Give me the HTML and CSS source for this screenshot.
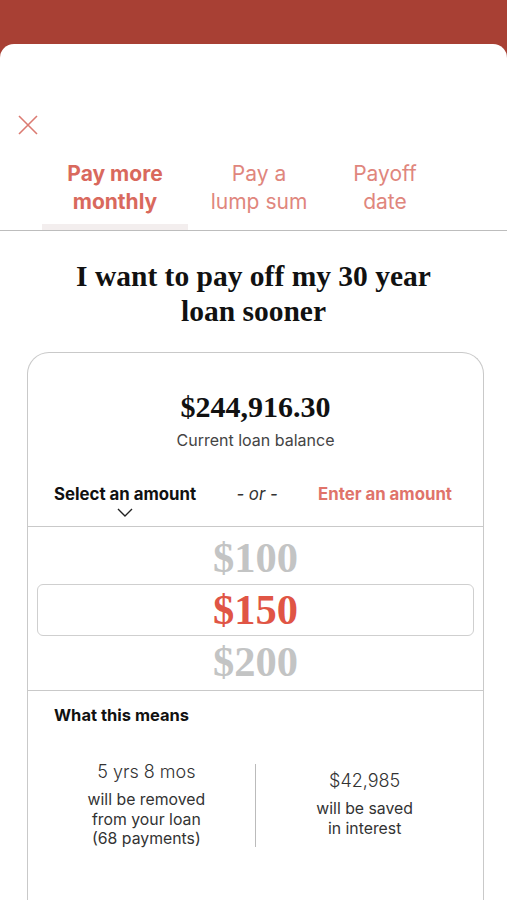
FILE: index.html
```html
<!DOCTYPE html>
<html lang="en">
<head>
    <meta charset="UTF-8">
    <meta name="viewport" content="width=device-width, initial-scale=1.0">
    <title>Pay off sooner</title>
    <link rel="stylesheet" href="styles.css">
</head>
<body>
    <div class="top-bar"></div>

    <div class="sheet">
        <button class="close" aria-label="Close">
            <svg width="22" height="22" viewBox="0 0 22 22">
                <path d="M2 2 L20 20 M20 2 L2 20" stroke="#db7b72" stroke-width="1.6" fill="none"/>
            </svg>
        </button>

        <!-- Onglets -->
        <nav class="tabs">
            <div class="tab tab-monthly active">Pay more<br>monthly</div>
            <div class="tab tab-lump">Pay a<br>lump sum</div>
            <div class="tab tab-date">Payoff<br>date</div>
        </nav>

        <h1 class="title">I want to pay off my 30 year<br>loan sooner</h1>

        <div class="card">
            <div class="balance">
                <div class="balance-value">$244,916.30</div>
                <div class="balance-label">Current loan balance</div>
            </div>

            <div class="choice-row">
                <div class="choice-select">
                    <span>Select an amount</span>
                    <svg width="16" height="9" viewBox="0 0 16 9">
                        <polyline points="1,1 8,8 15,1" stroke="#222" stroke-width="1.4" fill="none"/>
                    </svg>
                </div>
                <div class="choice-or">- or -</div>
                <div class="choice-enter">Enter an amount</div>
            </div>

            <div class="picker">
                <div class="picker-item">$100</div>
                <div class="picker-item selected">$150</div>
                <div class="picker-item">$200</div>
            </div>

            <div class="means">
                <h3>What this means</h3>
                <div class="stats">
                    <div class="stat stat-left">
                        <div class="stat-value">5 yrs 8 mos</div>
                        <div class="stat-text">will be removed<br>from your loan<br>(68 payments)</div>
                    </div>
                    <div class="stat-divider"></div>
                    <div class="stat stat-right">
                        <div class="stat-value">$42,985</div>
                        <div class="stat-text">will be saved<br>in interest</div>
                    </div>
                </div>
            </div>
        </div>
    </div>
</body>
</html>
```

FILE: styles.css
```css
body {
    font-family: Inter, "Noto Sans", sans-serif;
    margin: 0;
    padding: 0;
    background-color: #a84034;
    color: #111;
}
.top-bar {
    height: 44px;
}
.sheet {
    background-color: #fff;
    border-radius: 14px 14px 0 0;
    min-height: 856px;
    overflow: hidden;
}
.close {
    display: block;
    margin: 70px 0 0 17px;
    padding: 0;
    border: none;
    background: none;
    width: 22px;
    height: 22px;
}
.tabs {
    display: flex;
    margin-top: 24px;
    padding-left: 42px;
    border-bottom: 1.5px solid #bdbdbd;
}
.tab {
    text-align: center;
    font-size: 21px;
    line-height: 28px;
    color: #e0867d;
    padding-bottom: 8px;
    border-bottom: 6px solid transparent;
}
.tab-monthly {
    width: 146px;
}
.tab-lump {
    width: 142px;
}
.tab-date {
    width: 110px;
}
.tab.active {
    font-weight: 700;
    color: #d9695d;
    border-bottom-color: #f3eeee;
}
.title {
    font-family: "Liberation Serif", "Times New Roman", serif;
    font-weight: 700;
    font-size: 29.5px;
    line-height: 35px;
    text-align: center;
    margin: 28px 0 0;
}
.card {
    margin: 23px 23px 0 27px;
    border: 1.5px solid #c9c9c9;
    border-bottom: none;
    border-radius: 22px 22px 0 0;
    min-height: 560px;
}
.balance {
    text-align: center;
    padding-top: 37px;
}
.balance-value {
    font-family: "Liberation Serif", "Times New Roman", serif;
    font-weight: 700;
    font-size: 30px;
    line-height: 34px;
}
.balance-label {
    font-size: 16px;
    color: #444;
    margin-top: 6px;
}
.choice-row {
    display: flex;
    align-items: flex-start;
    justify-content: space-between;
    padding: 34px 31px 9px 26px;
    border-bottom: 1.5px solid #c9c9c9;
    font-size: 16.8px;
}
.choice-select {
    display: flex;
    flex-direction: column;
    align-items: center;
    font-weight: 700;
}
.choice-select svg {
    margin-top: 4px;
}
.choice-or {
    font-style: italic;
    color: #333;
}
.choice-enter {
    font-weight: 700;
    color: #e0736a;
}
.picker {
    padding: 5px 9px 2px;
    border-bottom: 1.5px solid #c9c9c9;
}
.picker-item {
    font-family: "Liberation Serif", "Times New Roman", serif;
    font-weight: 700;
    font-size: 42.5px;
    line-height: 50px;
    text-align: center;
    color: #c3c4c4;
    border: 1.5px solid transparent;
}
.picker-item.selected {
    color: #e05545;
    border-color: #cfcfcf;
    border-radius: 6px;
}
.means {
    padding: 14px 10px 40px;
}
.means h3 {
    font-size: 16.5px;
    font-weight: 700;
    margin: 0 0 0 16px;
}
.stats {
    display: flex;
    margin-top: 34px;
}
.stat {
    flex: 1;
    text-align: center;
    color: #333;
}
.stat-value {
    font-size: 18px;
    font-weight: 300;
    line-height: 26px;
    margin-bottom: 5px;
}
.stat-text {
    font-size: 15.8px;
    line-height: 19.5px;
}
.stat-right {
    padding-top: 9px;
}
.stat-divider {
    width: 1.5px;
    background-color: #bbb;
    margin: 5px 0 0;
    height: 83px;
}
```
